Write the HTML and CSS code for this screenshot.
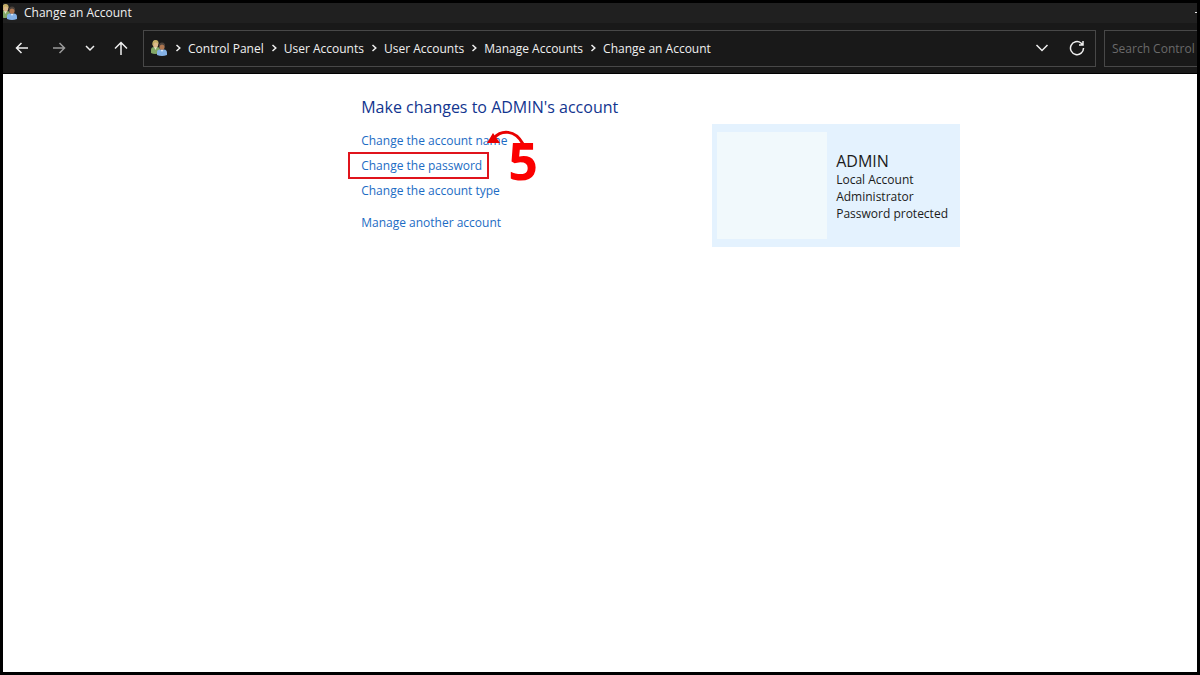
FILE: index.html
```html
<!DOCTYPE html>
<html lang="en">
<head>
  <meta charset="UTF-8" />
  <meta name="viewport" content="width=device-width, initial-scale=1.0"/>
  <title>Change an Account</title>
  <link rel="stylesheet" href="styles.css">
</head>
<body>
  <svg class="defs" aria-hidden="true">
    <defs>
      <symbol id="users" viewBox="0 0 16 16">
        <path d="M0 13V10Q0 7 3 7H6Q9 7 9 10V13Q4 15 0 13Z" fill="#83a766"/>
        <path d="M3 7L4.500 10L6 7Z" fill="#e4ead0"/>
        <ellipse cx="4.500" cy="4" rx="2.800" ry="3.500" fill="#dcb98b"/>
        <path d="M1.500 5Q1 0 4.500 0Q8 0 7.500 4Q6 2 4 2.500Q2.500 3 2.500 6Z" fill="#c3ae67"/>
        <path d="M6 15V12Q6 9.500 9 9.500H13Q16 9.500 16 13V15Q11 17 6 15Z" fill="#85b2e6"/>
        <path d="M9.500 9.500L11 12L12.500 9.500Z" fill="#dcecff"/>
        <ellipse cx="11" cy="6.500" rx="2.700" ry="3.300" fill="#ad7650"/>
        <path d="M8 7Q7.500 2.500 11 2.500Q14.500 2.500 14 7Q13 4.500 11 4.500Q9 4.500 8 7Z" fill="#4b423c"/>
      </symbol>
      <symbol id="sep" viewBox="0 0 6 8">
        <path d="M1.500 1L4.800 4L1.500 7" fill="none" stroke="currentColor" stroke-width="1.500"/>
      </symbol>
    </defs>
  </svg>

  <header>
    <div class="titlebar">
      <svg class="title-icon" viewBox="2 0 14 16"><use href="#users" width="16" height="16"/></svg>
      <span>Change an Account</span>
      <button class="minimize" aria-label="Minimize"></button>
    </div>
    <div class="toolbar">
      <nav class="nav-buttons">
        <button aria-label="Back"><svg width="14" height="14" viewBox="0 0 14 14"><path d="M13 7H1.500M6.500 2L1.500 7L6.500 12"/></svg></button>
        <button class="dim" aria-label="Forward"><svg width="14" height="14" viewBox="0 0 14 14"><path d="M1 7H12.500M7.500 2L12.500 7L7.500 12"/></svg></button>
        <button aria-label="Recent locations"><svg width="10" height="14" viewBox="0 0 10 14"><path d="M1 5L5 9L9 5"/></svg></button>
        <button aria-label="Up"><svg width="14" height="14" viewBox="0 0 14 14"><path d="M7 14V1.500M1 7.500L7 1.500L13 7.500"/></svg></button>
      </nav>
      <div class="address">
        <svg class="address-icon"><use href="#users"/></svg>
        <ol class="breadcrumb">
          <li><svg class="sep"><use href="#sep"/></svg><a href="#">Control Panel</a></li>
          <li><svg class="sep"><use href="#sep"/></svg><a href="#">User Accounts</a></li>
          <li><svg class="sep"><use href="#sep"/></svg><a href="#">User Accounts</a></li>
          <li><svg class="sep"><use href="#sep"/></svg><a href="#">Manage Accounts</a></li>
          <li><svg class="sep"><use href="#sep"/></svg><a href="#">Change an Account</a></li>
        </ol>
        <button aria-label="Previous locations"><svg width="14" height="14" viewBox="0 0 14 14"><path d="M1.500 4L7 9.500L12.500 4"/></svg></button>
        <button aria-label="Refresh"><svg width="16" height="16" viewBox="0 0 16 16"><path d="M14.500 8A6.500 6.500 0 1 1 12 3L13.500 4.500M14 1V5H10"/></svg></button>
      </div>
      <input class="search" type="text" placeholder="Search Control Panel" aria-label="Search Control Panel" />
    </div>
  </header>

  <main>
    <section class="tasks">
      <h1>Make changes to ADMIN's account</h1>
      <ul>
        <li><a href="#">Change the account name</a></li>
        <li class="marked">
          <a href="#">Change the password</a>
          <div class="step">
            <svg width="40" height="20" viewBox="0 0 40 20">
              <path d="M7 9C14 1 28 0 36 15" fill="none" stroke="#e90000" stroke-width="3"/>
              <path d="M0 14L6 4L13 14Z" fill="#e90000"/>
            </svg>
            <span>5</span>
          </div>
        </li>
        <li><a href="#">Change the account type</a></li>
        <li class="other"><a href="#">Manage another account</a></li>
      </ul>
    </section>
    <section class="account">
      <div class="picture"></div>
      <div class="details">
        <h2>ADMIN</h2>
        <p>Local Account</p>
        <p>Administrator</p>
        <p>Password protected</p>
      </div>
    </section>
  </main>
</body>
</html>
```
FILE: styles.css
```css
* {
  box-sizing: border-box;
}
body {
  margin: 0;
  min-height: 100vh;
  border: 3px solid #000;
  background-color: #fff;
  font-family: "Open Sans", "Noto Sans", sans-serif;
  font-size: 12px;
  color: #1b1b1b;
}
h1, h2, p, ul, ol {
  margin: 0;
  padding: 0;
  font-weight: normal;
  list-style: none;
}
a {
  color: inherit;
  text-decoration: none;
}
button {
  display: flex;
  padding: 0;
  border: none;
  background: none;
  color: inherit;
}
button svg {
  fill: none;
  stroke: currentColor;
  stroke-width: 1.5;
}
.defs {
  position: absolute;
  width: 0;
  height: 0;
}

/* window chrome */
header {
  background-color: #191919;
  border-bottom: 1px solid #000;
  color: #f0f0f0;
}
.titlebar {
  display: flex;
  align-items: center;
  gap: 7px;
  height: 20px;
  padding-bottom: 2px;
  background-color: #202020;
}
.title-icon {
  width: 14px;
  height: 16px;
}
.minimize {
  width: 2px;
  height: 1px;
  margin-left: auto;
  background-color: #f0f0f0;
}
.toolbar {
  display: flex;
  align-items: center;
  height: 50px;
  padding-left: 12px;
}
.nav-buttons {
  display: flex;
  align-items: center;
  gap: 19px;
  width: 128px;
}
.nav-buttons button:first-child {
  margin-right: 4px;
}
.dim {
  color: #9a9a9a;
}
.address {
  display: flex;
  flex: 1;
  align-items: center;
  height: 37px;
  padding: 0 10px 0 7px;
  border: 1px solid #484848;
}
.address-icon {
  width: 16px;
  height: 16px;
}
.address button {
  margin-left: 20px;
}
.breadcrumb {
  display: flex;
  flex: 1;
  gap: 7px;
  padding-left: 8px;
  white-space: nowrap;
}
.breadcrumb li {
  display: flex;
  align-items: center;
  gap: 7px;
}
.sep {
  width: 6px;
  height: 8px;
}
.search {
  width: 93px;
  height: 37px;
  margin-left: 8px;
  padding: 0 0 0 7px;
  border: 1px solid #484848;
  border-right: none;
  background-color: #191919;
  font: inherit;
  color: #f0f0f0;
}
.search::placeholder {
  color: #6a6a6a;
}

/* page */
main {
  display: flex;
  align-items: flex-start;
  padding: 22px 0 0 30%;
}
.tasks {
  width: 351px;
}
.tasks h1 {
  margin-bottom: 10px;
  font-size: 16px;
  line-height: 22px;
  color: #12358f;
}
.tasks li {
  width: max-content;
  line-height: 25px;
  color: #1c6cc4;
}
.tasks .other {
  margin-top: 7px;
}
.marked {
  position: relative;
  margin: 0 -13px;
  padding: 0 13px;
}
/* red frame round the link */
.marked::before {
  content: "";
  position: absolute;
  inset: -1px 6px -1px 0;
  border: 2px solid #e0141c;
}
.step {
  position: absolute;
  left: 139px;
  top: -24px;
  color: #fb0000;
}
.step svg {
  display: block;
}
.step span {
  position: absolute;
  left: 21px;
  top: 5px;
  font-size: 52px;
  font-weight: bold;
  line-height: 52px;
}
.account {
  display: flex;
  align-items: center;
  gap: 9px;
  width: 248px;
  margin-top: 28px;
  padding: 8px 5px;
  background-color: #e4f2fe;
}
.picture {
  width: 110px;
  height: 107px;
  background-color: #f1f9fc;
}
.details {
  padding-top: 19px;
  align-self: flex-start;
  line-height: 17px;
  white-space: nowrap;
}
.details h2 {
  font-size: 16px;
  line-height: 20px;
}
```
